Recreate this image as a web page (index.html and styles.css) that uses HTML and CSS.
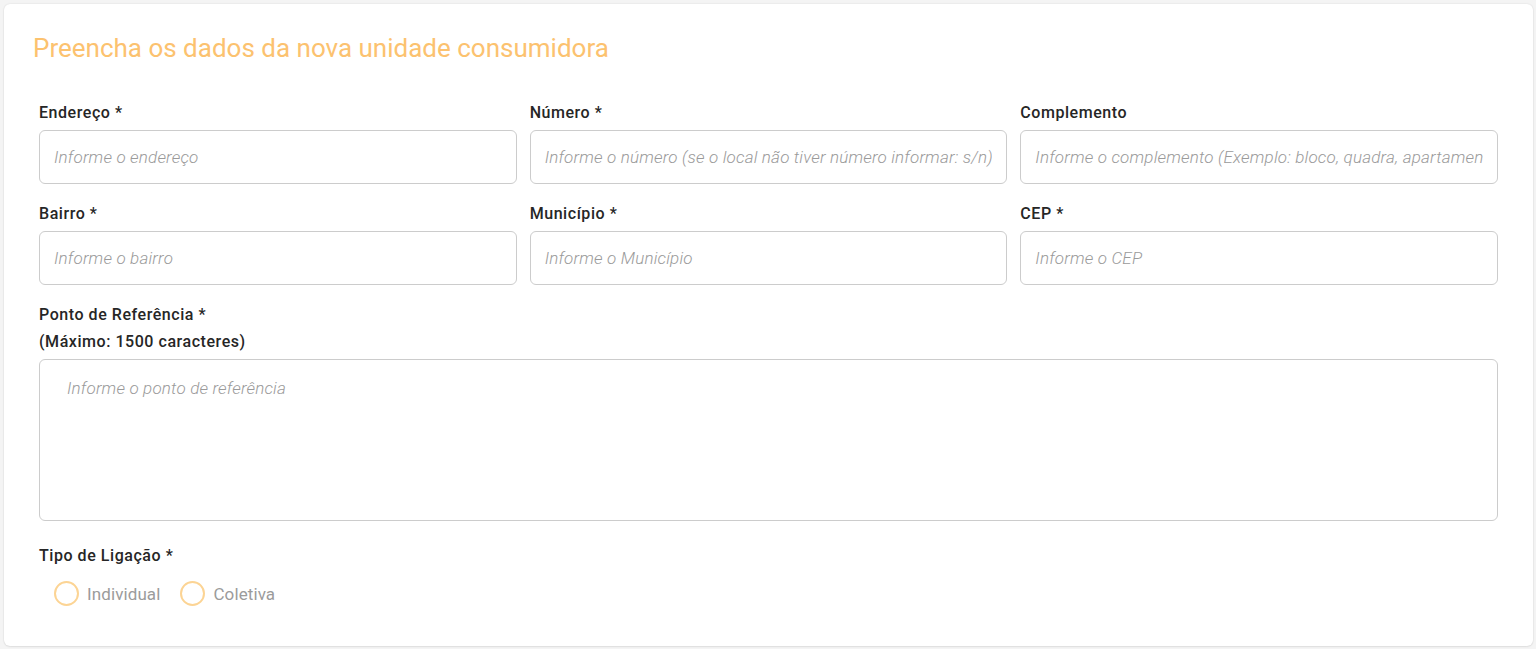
FILE: index.html
```html
<!DOCTYPE html>
<html lang="pt-BR">
<head>
<meta charset="utf-8">
<title>Nova unidade consumidora</title>
<link rel="stylesheet" href="styles.css">
</head>
<body>
<div class="card">
  <h1 class="title">Preencha os dados da nova unidade consumidora</h1>
  <form class="form">
    <div class="grid">
      <div class="field">
        <label class="label">Endereço *</label>
        <input class="input" type="text" placeholder="Informe o endereço">
      </div>
      <div class="field">
        <label class="label">Número *</label>
        <input class="input" type="text" placeholder="Informe o número (se o local não tiver número informar: s/n)">
      </div>
      <div class="field">
        <label class="label">Complemento</label>
        <input class="input" type="text" placeholder="Informe o complemento (Exemplo: bloco, quadra, apartamento)">
      </div>
      <div class="field">
        <label class="label">Bairro *</label>
        <input class="input" type="text" placeholder="Informe o bairro">
      </div>
      <div class="field">
        <label class="label">Município *</label>
        <input class="input" type="text" placeholder="Informe o Município">
      </div>
      <div class="field">
        <label class="label">CEP *</label>
        <input class="input" type="text" placeholder="Informe o CEP">
      </div>
    </div>
    <div class="field field-full">
      <label class="label label-top">Ponto de Referência *</label>
      <label class="label label-sub">(Máximo: 1500 caracteres)</label>
      <textarea class="textarea" placeholder="Informe o ponto de referência"></textarea>
    </div>
    <div class="field field-radio">
      <span class="label">Tipo de Ligação *</span>
      <div class="radios">
        <label class="radio"><span class="circle"></span><span class="radio-text">Individual</span></label>
        <label class="radio"><span class="circle"></span><span class="radio-text">Coletiva</span></label>
      </div>
    </div>
  </form>
</div>
</body>
</html>
```
FILE: styles.css
```css
* { box-sizing: border-box; }
html, body { margin: 0; padding: 0; }
body {
  background: #f4f4f4;
  font-family: Roboto, "Liberation Sans", Arial, sans-serif;
  padding: 4px 3px 3px 4px;
  height: 649px;
  overflow: hidden;
}
.card {
  background: #ffffff;
  border-radius: 6px;
  box-shadow: 0 0 2px rgba(0,0,0,0.12), 0 1px 2px rgba(0,0,0,0.06);
  height: 642px;
  padding: 28px 35px 0 35px;
}
.title {
  margin: 0 0 0 -6px;
  font-size: 26px;
  line-height: 32px;
  font-weight: 400;
  color: #fcc26f;
}
.form {
  margin-top: 37px;
}
.grid {
  display: grid;
  grid-template-columns: repeat(3, 1fr);
  column-gap: 13px;
  row-gap: 18px;
}
.field {
  display: flex;
  flex-direction: column;
}
.label {
  font-size: 16px;
  letter-spacing: 0.55px;
  line-height: 24px;
  font-weight: 500;
  color: #262626;
  margin-bottom: 5px;
}
.field-full { margin-top: 18px; }
.label-top { margin-bottom: 0; }
.label-sub { margin-top: 3px; margin-bottom: 5px; }
.input {
  height: 54px;
  border: 1px solid #cccccc;
  border-radius: 6px;
  padding: 0 14px;
  font-family: Roboto, "Liberation Sans", Arial, sans-serif;
  font-size: 17px;
  letter-spacing: 0.18px;
  color: #333;
  outline: none;
  background: #fff;
}
.input::placeholder, .textarea::placeholder {
  color: #9a9a9a;
  font-style: italic;
  font-weight: 300;
  opacity: 1;
}
.textarea {
  height: 162px;
  border: 1px solid #cccccc;
  border-radius: 6px;
  padding: 16px 27px;
  font-family: Roboto, "Liberation Sans", Arial, sans-serif;
  font-size: 17px;
  letter-spacing: 0.18px;
  line-height: 24px;
  resize: none;
  outline: none;
}
.field-radio { margin-top: 23px; }
.field-radio .label { margin-bottom: 0; }
.radios {
  display: flex;
  gap: 20px;
  padding-left: 15px;
  margin-top: 13px;
}
.radio {
  display: flex;
  align-items: center;
  gap: 8px;
}
.circle {
  width: 25px;
  height: 25px;
  border: 2px solid #fcd494;
  border-radius: 50%;
}
.radio-text {
  font-size: 17px;
  letter-spacing: 0.1px;
  color: #9b9b9b;
  line-height: 24px;
}
```
